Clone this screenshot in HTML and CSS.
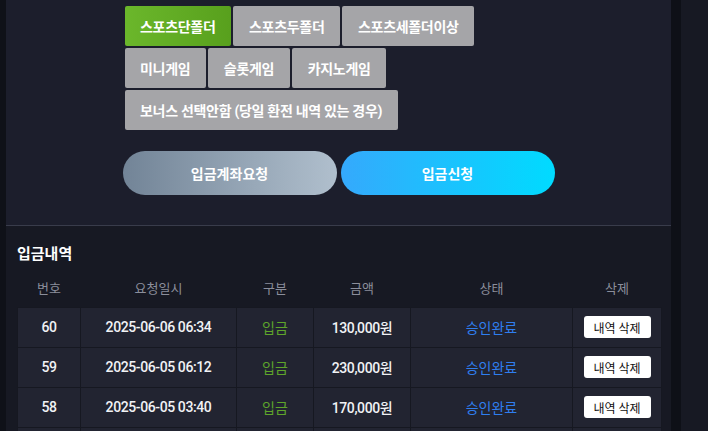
FILE: index.html
```html
<!DOCTYPE html>
<html lang="ko">
<head>
	<meta charset="UTF-8">
	<title>입금신청</title>
	<link rel="stylesheet" href="styles.css">
</head>
<body>
	<div class="layout">
		<div class="edge-left"></div>
		<div class="panel">
			<div class="deposit-form">
				<div class="wrap">
					<!-- 보너스 선택 -->
					<div class="bonus-tabs">
						<div class="tab-row">
							<button class="tab on">스포츠단폴더</button>
							<button class="tab">스포츠두폴더</button>
							<button class="tab">스포츠세폴더이상</button>
						</div>
						<div class="tab-row">
							<button class="tab">미니게임</button>
							<button class="tab">슬롯게임</button>
							<button class="tab">카지노게임</button>
						</div>
						<div class="tab-row">
							<button class="tab">보너스 선택안함 (당일 환전 내역 있는 경우)</button>
						</div>
					</div>
					<div class="actions">
						<button class="btn btn-gray">입금계좌요청</button>
						<button class="btn btn-blue">입금신청</button>
					</div>
				</div>
			</div>
			<div class="history">
				<h4>입금내역</h4>
				<table class="list">
					<colgroup>
						<col class="c-no">
						<col class="c-date">
						<col class="c-type">
						<col class="c-amount">
						<col class="c-state">
						<col class="c-del">
					</colgroup>
					<thead>
						<tr>
							<th>번호</th>
							<th>요청일시</th>
							<th>구분</th>
							<th>금액</th>
							<th>상태</th>
							<th>삭제</th>
						</tr>
					</thead>
					<tbody>
						<tr>
							<td>60</td>
							<td>2025-06-06 06:34</td>
							<td class="green">입금</td>
							<td>130,000원</td>
							<td class="blue">승인완료</td>
							<td><button class="del">내역 삭제</button></td>
						</tr>
						<tr>
							<td>59</td>
							<td>2025-06-05 06:12</td>
							<td class="green">입금</td>
							<td>230,000원</td>
							<td class="blue">승인완료</td>
							<td><button class="del">내역 삭제</button></td>
						</tr>
						<tr>
							<td>58</td>
							<td>2025-06-05 03:40</td>
							<td class="green">입금</td>
							<td>170,000원</td>
							<td class="blue">승인완료</td>
							<td><button class="del">내역 삭제</button></td>
						</tr>
						<tr class="more">
							<td></td>
							<td></td>
							<td></td>
							<td></td>
							<td></td>
							<td></td>
						</tr>
					</tbody>
				</table>
			</div>
		</div>
		<div class="edge-right"></div>
	</div>
</body>
</html>
```

FILE: styles.css
```css
*{margin:0;padding:0;box-sizing:border-box;}
body{background-color:#171923;font-family:Roboto,"Noto Sans CJK KR",sans-serif;color:#fff;overflow:hidden;}
button{font-family:inherit;border:0;cursor:pointer;}

.layout{display:flex;height:431px;}
.edge-left{width:6px;background-color:#0f1118;flex:none;}
.panel{width:665px;flex:none;overflow:hidden;}
.edge-right{width:10px;background-color:#0e1017;flex:none;}

/*입금 신청 영역*/
.deposit-form{background-color:#1c1e2c;height:226px;border-bottom:1px solid #393c4b;padding-top:6px;}
.wrap{width:432px;margin:0 auto;}
.bonus-tabs{padding-left:2px;display:flex;flex-direction:column;gap:2px;}
.tab-row{display:flex;gap:2.5px;}
.tab{height:40px;padding:0 15.5px;border-radius:2px;background-color:#a5a5a8;color:#fff;font-size:14px;font-weight:700;letter-spacing:-0.3px;}
.tab.on{background-image:linear-gradient(90deg,#6bb72b,#58a01d);}

.actions{display:flex;gap:4px;margin-top:21px;}
.btn{width:214px;height:44px;border-radius:22px;color:#fff;font-size:14px;font-weight:700;}
.btn-gray{background-image:linear-gradient(90deg,#728497,#b0bfcd);}
.btn-blue{background-image:linear-gradient(90deg,#35a9fc,#00dbff);}

/*입금 내역*/
.history{padding:17px 10px 0 11px;}
.history h4{font-size:15px;font-weight:700;line-height:22px;margin-bottom:7px;}
.list{width:644px;border-collapse:collapse;table-layout:fixed;}
.c-no{width:63px;}
.c-date{width:156px;}
.c-type{width:77px;}
.c-amount{width:97px;}
.c-state{width:162px;}
.c-del{width:89px;}
.list th{height:35px;font-size:13px;font-weight:400;color:#8b8e9b;vertical-align:middle;padding-bottom:3px;}
.list td{height:40px;background-color:#222431;border:1px solid #161821;text-align:center;font-size:14px;font-weight:500;letter-spacing:-0.4px;color:#f1f2f5;}
.list td.green{color:#5ea52b;font-weight:400;letter-spacing:0;}
.list td.blue{color:#2f7ef0;font-weight:400;letter-spacing:0;}
.del{background-color:#fff;color:#111;font-size:12px;width:67px;height:22px;border-radius:3px;font-weight:400;}
```
